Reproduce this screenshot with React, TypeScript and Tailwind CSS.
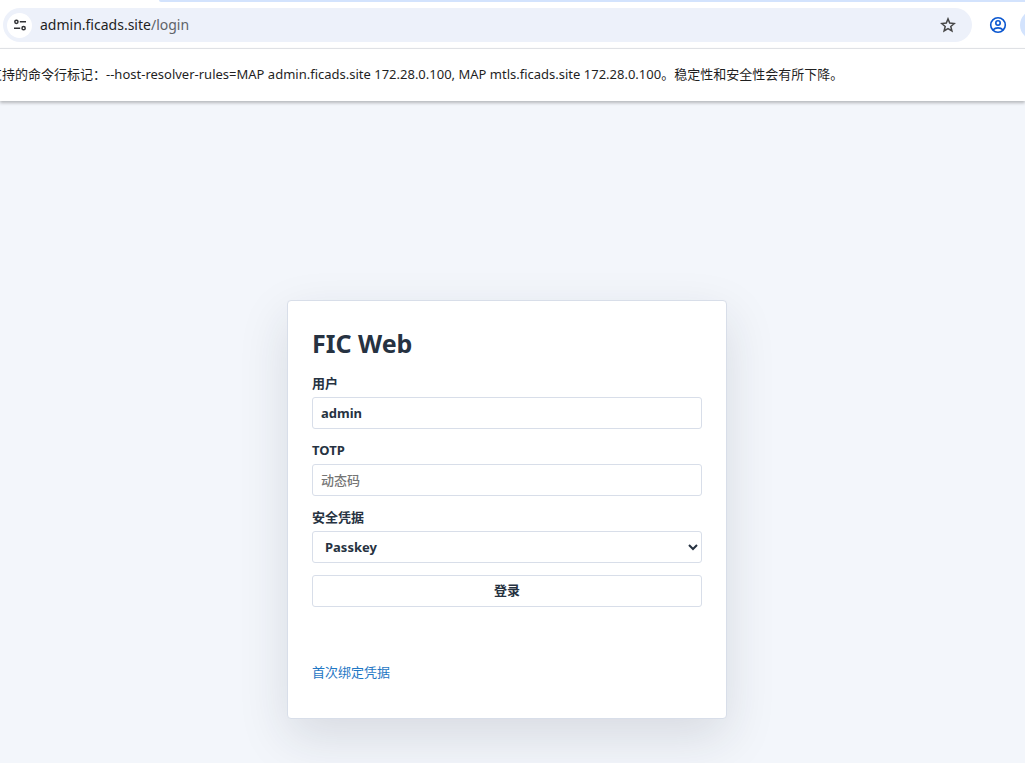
import { FC, ReactNode } from "react";

const SiteInfoIcon = () => (
  <svg width="12" height="12" viewBox="0 0 12 12" fill="none" stroke="currentColor" strokeWidth="1.5">
    <circle cx="2.4" cy="2.8" r="1.6" />
    <path d="M5.8 2.8H12M0 9.2H6.2" />
    <circle cx="9.6" cy="9.2" r="1.6" />
  </svg>
);

const StarIcon = () => (
  <svg width="16" height="16" viewBox="0 0 16 16" fill="none" stroke="currentColor" strokeWidth="1.5">
    <path d="M8 1.9l1.7 4.2 4.6.4-3.5 3 1.1 4.5L8 11.6 4.1 14l1.1-4.5-3.5-3 4.6-.4z" />
  </svg>
);

const ProfileIcon = () => (
  <svg width="18" height="18" viewBox="0 0 18 18" fill="none" stroke="currentColor" strokeWidth="1.6">
    <circle cx="9" cy="9" r="7.3" />
    <circle cx="9" cy="7" r="2.2" />
    <path d="M3.8 14c1.5-1.4 3.2-2.1 5.2-2.1s3.7.7 5.2 2.1" />
  </svg>
);

const BrowserBar = () => (
  <header className="bg-white">
    <div className="h-[2px] ml-[159px] bg-[#d3e3fd] rounded-bl-lg" />
    <div className="flex items-center h-[46px] pl-[3px] overflow-hidden">
      <div className="flex flex-1 items-center h-[34px] px-1 rounded-full bg-[#edf1fa]">
        <button
          aria-label="Site information"
          className="flex justify-center items-center size-[25px] rounded-full bg-white text-[#303134]"
        >
          <SiteInfoIcon />
        </button>
        <p className="flex-1 pl-2 text-[14px] leading-5 text-[#1f1f1f]">
          admin.ficads.site<span className="text-[#5f6368]">/login</span>
        </p>
        <button aria-label="Bookmark" className="mr-3 text-[#474747]">
          <StarIcon />
        </button>
      </div>
      <button aria-label="Profile" className="ml-[17px] mr-[13px] text-[#0b57d0]">
        <ProfileIcon />
      </button>
      <div className="w-[5px]">
        <div className="size-[30px] rounded-full bg-[#d3e3fd]" />
      </div>
    </div>
  </header>
);

const InfoBar = () => (
  <div className="relative flex items-center h-[53px] pb-[3px] border-t border-[#dfe1e5] bg-white overflow-hidden shadow-[0_2px_3px_rgba(0,0,0,0.25)]">
    <p className="-ml-[11px] text-[13px] leading-5 whitespace-nowrap text-[#1f1f1f]">
      支持的命令行标记：--host-resolver-rules=MAP admin.ficads.site 172.28.0.100, MAP
      mtls.ficads.site 172.28.0.100。稳定性和安全性会有所下降。
    </p>
  </div>
);

interface IField {
  id: string;
  label: string;
  children: ReactNode;
}

const Field: FC<IField> = ({ id, label, children }) => (
  <div className="flex flex-col gap-[5px]">
    <label htmlFor={id} className="leading-[18px]">
      {label}
    </label>
    {children}
  </div>
);

const control = "w-full h-8 rounded-[3px] border border-[#d8dee9] bg-white";

const LoginForm = () => (
  <form className="flex flex-col gap-3 text-[13px] font-bold" onSubmit={(e) => e.preventDefault()}>
    <Field id="user" label="用户">
      <input id="user" defaultValue="admin" className={`${control} px-2`} />
    </Field>
    <Field id="totp" label="TOTP">
      <input
        id="totp"
        placeholder="动态码"
        className={`${control} px-2 placeholder:font-medium placeholder:text-[#757575]`}
      />
    </Field>
    <Field id="credential" label="安全凭据">
      <select id="credential" className={`${control} px-2`}>
        <option>Passkey</option>
      </select>
    </Field>
    <button className={control}>登录</button>
  </form>
);

export default function App() {
  return (
    <div className="flex flex-col min-h-screen overflow-hidden bg-[#f3f6fb] font-['Noto_Sans','Noto_Sans_CJK_SC',sans-serif]">
      <BrowserBar />
      <InfoBar />
      <main className="flex-1 pt-[199px] pr-[11px] pb-11">
        <section className="w-full max-w-[440px] mx-auto px-6 pt-6 pb-9 rounded-[4px] border border-[#d8dee9] bg-white text-[#263241] shadow-[0_18px_50px_rgba(31,41,51,0.13)]">
          <h1 className="mb-[13px] text-[25px] leading-9 font-bold">FIC Web</h1>
          <LoginForm />
          <a href="#" className="block w-fit mt-[55px] text-[13px] leading-5 text-[#1f77c4]">
            首次绑定凭据
          </a>
        </section>
      </main>
    </div>
  );
}
